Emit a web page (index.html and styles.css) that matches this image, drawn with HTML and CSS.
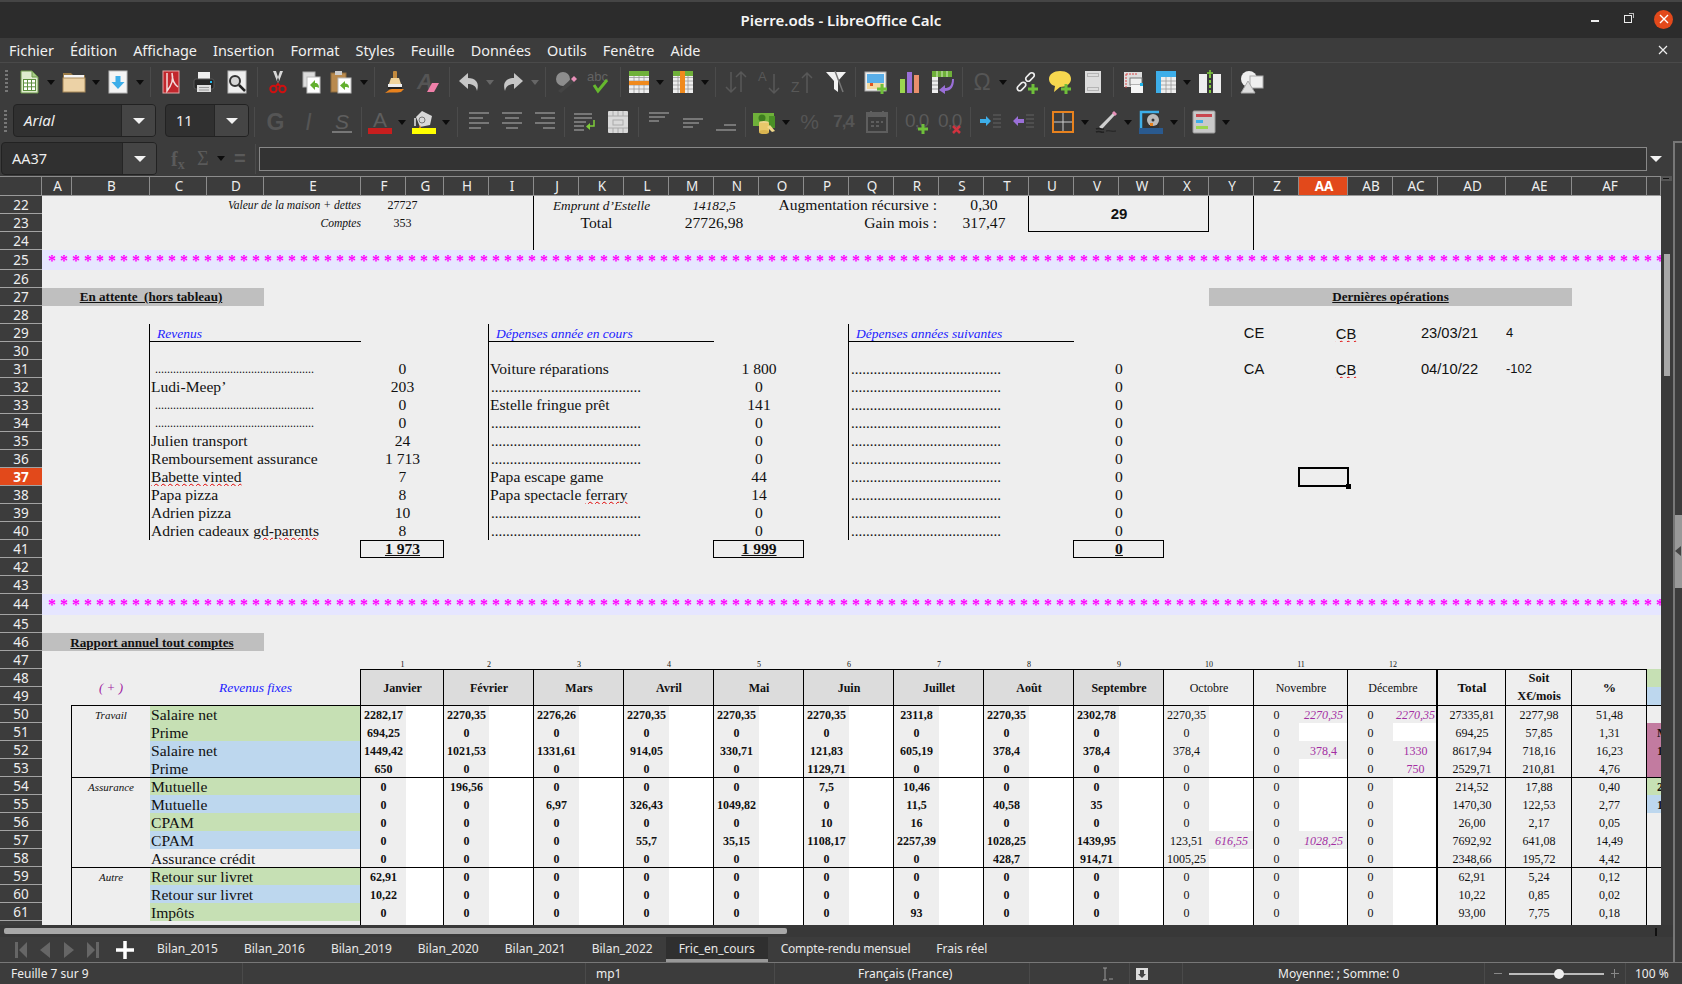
FILE: index.html
```html
<!DOCTYPE html>
<html lang="fr">
<head>
    <meta charset="UTF-8">
    <title>Pierre.ods - LibreOffice Calc</title>
    <link rel="stylesheet" href="styles.css">
</head>
<body>
<header class="title">
    <span class="title-text">Pierre.ods - LibreOffice Calc</span>
    <div class="win-btns">
        <span class="win-min"></span>
        <span class="win-max"></span>
        <span class="win-close"><svg width="10" height="10" viewBox="0 0 10 10"><path d="M1 1l8 8M9 1l-8 8" stroke="#fff" stroke-width="1.4"/></svg></span>
    </div>
</header>
<nav class="menu">
    <span>Fichier</span><span>Édition</span><span>Affichage</span><span>Insertion</span><span>Format</span><span>Styles</span><span>Feuille</span><span>Données</span><span>Outils</span><span>Fenêtre</span><span>Aide</span>
    <svg class="menu-close" width="10" height="10" viewBox="0 0 10 10"><path d="M1 1l8 8M9 1l-8 8" stroke="#eee" stroke-width="1.2"/></svg>
</nav>

<div class="toolbar tb1">
    <span class="grip"></span>
    <span class="tb"><svg viewBox="0 0 24 24"><path d="M4 1h11l6 6v16H4z" fill="#dfeccf" stroke="#6e9a4c"/><path d="M15 1v6h6z" fill="#a9cd88" stroke="#6e9a4c"/><rect x="6.5" y="9.5" width="12" height="11" fill="#fff" stroke="#5c8f3e"/><path d="M6.5 13h12M6.5 16.8h12M10.5 9.5v11M14.5 9.5v11" stroke="#5c8f3e"/></svg></span>
    <span class="dd"></span>
    <span class="tb"><svg viewBox="0 0 24 24"><path d="M1 3h8l2 2h12v6H1z" fill="#9a7b47"/><rect x="2" y="5" width="20" height="4" fill="#f5f5f5"/><rect x="1" y="8" width="22" height="14" fill="#ecd2a6" stroke="#a98a5a"/></svg></span>
    <span class="dd"></span>
    <span class="tb w32"><svg viewBox="0 0 24 24"><rect x="3" y="1" width="18" height="22" fill="#f4f4f4" stroke="#bbb"/><path d="M9.5 6h5v6h4l-6.5 7-6.5-7h4z" fill="#3daee9"/></svg></span>
    <span class="dd"></span>
    <span class="sep"></span>
    <span class="tb"><svg viewBox="0 0 24 24"><rect x="4" y="1" width="16" height="22" fill="#c2272d" stroke="#e6a5a5"/><path d="M8 3v18c4-5 7-11 5-18M13 3c0 6 2 11 6 14" fill="none" stroke="#f3dcdc" stroke-width="1.5"/></svg></span>
    <span class="tb"><svg viewBox="0 0 24 24"><rect x="6" y="2" width="12" height="8" fill="#eee"/><rect x="2" y="9" width="20" height="10" rx="2" fill="#262626" stroke="#555"/><rect x="5" y="15" width="14" height="7" fill="#ddd"/><path d="M7 17.5h10M7 20h10" stroke="#999"/><rect x="18" y="11" width="2" height="2" fill="#1fb5e9"/></svg></span>
    <span class="tb"><svg viewBox="0 0 24 24"><rect x="3" y="1" width="18" height="22" fill="#eee" stroke="#bbb"/><circle cx="10" cy="11" r="5" fill="#d5d5d5" stroke="#333" stroke-width="2"/><path d="M14 15l6 6" stroke="#222" stroke-width="2.5"/></svg></span>
    <span class="sep"></span>
    <span class="tb"><svg viewBox="0 0 24 24"><path d="M7 1l5 13 1-4-3-9zM17 1l-5 13-1-4 3-9z" fill="#d8d8d8"/><circle cx="7.5" cy="19" r="3.2" fill="none" stroke="#d01010" stroke-width="2"/><circle cx="16.5" cy="19" r="3.2" fill="none" stroke="#d01010" stroke-width="2"/><path d="M10 16l2-2 2 2" fill="none" stroke="#d01010" stroke-width="2"/></svg></span>
    <span class="tb"><svg viewBox="0 0 24 24"><rect x="4" y="2" width="12" height="15" fill="#ddd" stroke="#aaa"/><rect x="8" y="7" width="13" height="16" fill="#fff" stroke="#bbb"/><path d="M16 10l-5 5 5 5v-3c2 0 3 0 4 1 0-3-1-5-4-5z" fill="#63b02f"/></svg></span>
    <span class="tb w30"><svg viewBox="0 0 24 24"><rect x="1" y="3" width="15" height="19" fill="#b98a4e" stroke="#8c6a3c"/><rect x="5" y="1" width="7" height="4" fill="#ccc"/><rect x="8" y="8" width="13" height="15" fill="#fff" stroke="#bbb"/><path d="M15 11l-5 4.500 5 4.500v-3c2 0 3 0 4 1 0-3-1-4.500-4-4.500z" fill="#63b02f"/></svg></span>
    <span class="dd w13"></span>
    <span class="sep"></span>
    <span class="tb"><svg viewBox="0 0 24 24"><rect x="10" y="1" width="4" height="8" rx="1" fill="#c28a3e"/><path d="M8 8h8l2 6H6z" fill="#efd39c"/><rect x="5" y="14" width="14" height="3" fill="#eee"/><rect x="5" y="17" width="14" height="2" fill="#222"/><path d="M2 23c2-1 4-4 7-4h12l-3 3c-5 1-10 0-16 1z" fill="#e8821e"/></svg></span>
    <span class="tb w34"><svg viewBox="0 0 24 24"><text x="1" y="19" class="ico-t" font-size="22" font-style="italic" font-weight="bold" fill="#555">A</text><path d="M11 22l5-9h7l-5 9z" fill="#ef7fa8"/></svg></span>
    <span class="sep"></span>
    <span class="tb w31"><svg viewBox="0 0 24 24"><path d="M11 3L2 11l9 8v-5c5 0 8 2 9 7 3-9-2-13-9-13z" fill="#c6c6c6"/></svg></span>
    <span class="dd off"></span>
    <span class="tb"><svg viewBox="0 0 24 24"><path d="M13 3l9 8-9 8v-5c-5 0-8 2-9 7-3-9 2-13 9-13z" fill="#c6c6c6"/></svg></span>
    <span class="dd off"></span>
    <span class="sep"></span>
    <span class="tb"><svg viewBox="0 0 24 24"><circle cx="9" cy="9" r="7" fill="#8d8d8d"/><path d="M4 21l13-12 3 3L7 23z" fill="#444"/><path d="M17 9l3-3 3 3-3 3z" fill="#e88fb8"/></svg></span>
    <span class="tb w34"><svg viewBox="0 0 24 24"><text x="0" y="11" class="ico-t" font-size="13" fill="#636363">abc</text><path d="M7 15l4 6 9-11" stroke="#66b82e" stroke-width="3" fill="none"/></svg></span>
    <span class="sep"></span>
    <span class="tb w30"><svg viewBox="0 0 24 24"><rect x="2" y="1" width="20" height="22" fill="#eee"/><path d="M2 7.500h20M2 11h20M2 15h20M2 19h20M7 1v22M12 1v22M17 1v22" stroke="#999" stroke-width=".8"/><rect x="2" y="1" width="20" height="5" fill="#6fb13a"/><rect x="2" y="11" width="20" height="4" fill="#f08a1d"/></svg></span>
    <span class="dd"></span>
    <span class="tb"><svg viewBox="0 0 24 24"><rect x="2" y="1" width="20" height="22" fill="#eee"/><path d="M2 7.500h20M2 11h20M2 15h20M2 19h20M7 1v22M12 1v22M17 1v22" stroke="#999" stroke-width=".8"/><rect x="2" y="1" width="20" height="5" fill="#6fb13a"/><rect x="9" y="1" width="5" height="22" fill="#f08a1d"/></svg></span>
    <span class="dd"></span>
    <span class="sep"></span>
    <span class="tb w34"><svg viewBox="0 0 24 24"><path d="M7 2v20M2 17l5 5 5-5M17 22V2M12 7l5-5 5 5" fill="none" stroke="#585858" stroke-width="1.500"/></svg></span>
    <span class="tb"><svg viewBox="0 0 24 24"><text x="0" y="11" class="ico-t" font-size="13" fill="#585858">A</text><path d="M16 4v19M11 18l5 5 5-5" fill="none" stroke="#585858" stroke-width="1.500"/></svg></span>
    <span class="tb w34"><svg viewBox="0 0 24 24"><text x="0" y="22" class="ico-t" font-size="14" fill="#585858">Z</text><path d="M16 23V3M11 8l5-5 5 5" fill="none" stroke="#585858" stroke-width="1.500"/></svg></span>
    <span class="tb w31"><svg viewBox="0 0 24 24"><path d="M2 2h20l-8 9v11l-4-3v-8z" fill="#f2f2f2"/><path d="M11 1l8 21" stroke="#777" stroke-width="1.500"/></svg></span>
    <span class="sep"></span>
    <span class="tb w34"><svg viewBox="0 0 24 24"><rect x="1" y="2" width="21" height="19" fill="#eee" stroke="#aaa"/><rect x="3" y="4" width="17" height="9" fill="#59aee8"/><rect x="3" y="13" width="17" height="6" fill="#f3d9a0"/><rect x="6" y="13" width="3" height="3" fill="#e0541e"/><path d="M18 14v10M13 19h10" stroke="#6fbf3a" stroke-width="3"/></svg></span>
    <span class="tb w32"><svg viewBox="0 0 24 24"><rect x="3" y="9" width="5" height="14" fill="#9bd64f"/><rect x="10" y="2" width="5" height="21" fill="#9a6fd8"/><rect x="17" y="5" width="5" height="18" fill="#ea8f6c"/></svg></span>
    <span class="tb"><svg viewBox="0 0 24 24"><rect x="2" y="1" width="20" height="6" fill="#6fb13a"/><path d="M7 1v6M12 1v6M17 1v6" stroke="#d7ebc2"/><rect x="2" y="7" width="6" height="16" fill="#eee"/><path d="M2 11h6M2 15h6M2 19h6" stroke="#999"/><path d="M22 9c0 7-3 9-7 9v-3l-6 5 6 4v-3c6 0 9-4 9-12z" fill="#9a6fd8"/></svg></span>
    <span class="sep"></span>
    <span class="tb w31"><svg viewBox="0 0 24 24"><text x="12" y="20" text-anchor="middle" class="ico-t" font-size="23" fill="#565656">Ω</text></svg></span>
    <span class="dd"></span>
    <span class="tb w35"><svg viewBox="0 0 24 24"><g fill="none" stroke="#eee" stroke-width="1.700"><rect x="-2.500" y="-5" width="5" height="10" rx="2.500" transform="translate(6.500 16.500) rotate(45)"/><rect x="-2.500" y="-5" width="5" height="10" rx="2.500" transform="translate(15 7) rotate(45)"/></g><path d="M18 14v10M13 19h10" stroke="#6fbf3a" stroke-width="3"/></svg></span>
    <span class="tb w32"><svg viewBox="0 0 24 24"><path d="M12 1c7 0 11 3 11 8s-5 8-11 8l-6 5 1-6c-4-1-6-4-6-7 0-5 5-8 11-8z" fill="#f7d84f"/><path d="M18 14v10M13 19h10" stroke="#6fbf3a" stroke-width="3"/></svg></span>
    <span class="tb"><svg viewBox="0 0 24 24"><rect x="4" y="1" width="16" height="22" fill="#ddd"/><rect x="6.500" y="3.500" width="11" height="3" fill="none" stroke="#b5b5b5"/><rect x="6.500" y="17.500" width="11" height="3" fill="none" stroke="#b5b5b5"/></svg></span>
    <span class="sep"></span>
    <span class="tb"><svg viewBox="0 0 24 24"><rect x="2" y="2" width="18" height="15" fill="#ddd"/><path d="M4 4h12M4 4v14" stroke="#d44" stroke-dasharray="2 1"/><rect x="8" y="8" width="12" height="7" fill="#efefef" stroke="#777"/><rect x="9" y="15" width="12" height="8" fill="#f5f5f5"/><rect x="18" y="13" width="3" height="3" fill="#1fb5e9"/></svg></span>
    <span class="tb w31"><svg viewBox="0 0 24 24"><rect x="2" y="1" width="20" height="22" fill="#eee"/><path d="M2 11h20M2 15h20M2 19h20M12 1v22M17 1v22" stroke="#999" stroke-width=".8"/><rect x="2" y="1" width="20" height="6" fill="#3daee9"/><rect x="2" y="1" width="5" height="22" fill="#3daee9"/></svg></span>
    <span class="dd"></span>
    <span class="tb w34"><svg viewBox="0 0 24 24"><rect x="1" y="4" width="8" height="19" fill="#efefef"/><rect x="15" y="4" width="8" height="19" fill="#efefef"/><path d="M12 5v18" stroke="#7ecb3a" stroke-width="2" stroke-dasharray="3 2"/><path d="M12 0v6M9 3h6" stroke="#7ecb3a" stroke-width="1.500"/></svg></span>
    <span class="sep"></span>
    <span class="tb"><svg viewBox="0 0 24 24"><circle cx="9" cy="9" r="8" fill="#efefef"/><rect x="10" y="6" width="13" height="12" fill="#efefef" stroke="#aaa"/><path d="M8 11l7 12H1z" fill="#dedede" stroke="#aaa"/></svg></span>
</div>

<div class="toolbar tb2">
    <span class="grip"></span>
    <div class="combo font-box"><span class="combo-text ital">Arial</span><span class="combo-btn"></span></div>
    <div class="combo size-box"><span class="combo-text">11</span><span class="combo-btn"></span></div>
    <span class="sep w10"></span>
    <span class="tb"><span class="gl bold">G</span></span>
    <span class="tb"><span class="gl ital">I</span></span>
    <span class="tb"><svg viewBox="0 0 24 24"><text x="12" y="19" text-anchor="middle" class="ico-t" font-size="21" font-style="italic" fill="#5e5e5e">S</text><rect x="2" y="21" width="20" height="2" fill="#777"/></svg></span>
    <span class="sep w6"></span>
    <span class="tb w32"><svg viewBox="0 0 24 24"><text x="12" y="17" text-anchor="middle" class="ico-t" font-size="21" fill="#5e5e5e">A</text><rect y="18" width="24" height="6" fill="#c81e1e"/></svg></span>
    <span class="dd"></span>
    <span class="tb w32"><svg viewBox="0 0 24 24"><path d="M4 7l6-6 10 5-2 9-10 2z" fill="#d8d8d8"/><circle cx="10" cy="10" r="3" fill="none" stroke="#777"/><path d="M3 8v8" stroke="#bbb" stroke-width="2"/><path d="M7 18l1-3 1 3z" fill="#f08a1d"/><rect y="18" width="24" height="6" fill="#ffff00"/></svg></span>
    <span class="dd"></span>
    <span class="sep w10"></span>
    <span class="tb"><svg viewBox="0 0 24 24" class="lines"><path d="M2 3h20M2 8h14M2 13h20M2 18h12"/></svg></span>
    <span class="tb"><svg viewBox="0 0 24 24" class="lines"><path d="M2 3h20M5 8h14M2 13h20M6 18h12"/></svg></span>
    <span class="tb"><svg viewBox="0 0 24 24" class="lines"><path d="M2 3h20M8 8h14M2 13h20M10 18h12"/></svg></span>
    <span class="sep w6"></span>
    <span class="tb w34"><svg viewBox="0 0 24 24" class="lines"><path d="M2 4h18M2 8h18M2 12h12M2 16h10M2 20h10"/><path d="M22 10v6h-5" fill="none" style="stroke:#7ecb3a"/><path d="M18 13l-4 3.500 4 3.500z" style="fill:#7ecb3a;stroke:none"/></svg></span>
    <span class="tb"><svg viewBox="0 0 24 24"><rect x="2" y="1" width="20" height="22" rx="1" fill="#d9d9d9"/><path d="M2 6h20M2 18h20M7 1v5M12 1v5M17 1v5M7 18v5M12 18v5M17 18v5" stroke="#aaa"/><rect x="7" y="10" width="10" height="5" fill="none" stroke="#aaa"/></svg></span>
    <span class="sep"></span>
    <span class="tb w34"><svg viewBox="0 0 24 24" class="lines"><path d="M2 3h20M2 7h16M2 11h10"/></svg></span>
    <span class="tb"><svg viewBox="0 0 24 24" class="lines"><path d="M2 9h20M2 13h16M2 17h10"/></svg></span>
    <span class="tb"><svg viewBox="0 0 24 24" class="lines"><path d="M10 15h12M2 20h20"/></svg></span>
    <span class="sep w6"></span>
    <span class="tb w32"><svg viewBox="0 0 24 24"><rect x="1" y="3" width="21" height="13" fill="#6fb13a"/><circle cx="10" cy="8" r="3.500" fill="#3e7d1f"/><rect x="17" y="6" width="6" height="12" fill="#4a9026"/><ellipse cx="12" cy="13" rx="5" ry="2" fill="#ecd38a"/><rect x="7" y="13" width="10" height="9" fill="#e8c86a"/><ellipse cx="12" cy="22" rx="5" ry="2" fill="#d9b450"/><path d="M18 15l5 6-3 1-5-5z" fill="#f0d88a"/></svg></span>
    <span class="dd"></span>
    <span class="tb w35"><span class="gl pct">%</span></span>
    <span class="tb"><span class="gl num">7,4</span></span>
    <span class="tb"><svg viewBox="0 0 24 24"><rect x="2" y="3" width="20" height="19" fill="none" stroke="#5e5e5e" stroke-width="2"/><rect x="2" y="3" width="20" height="4" fill="#5e5e5e"/><path d="M6 1v4M18 1v4" stroke="#5e5e5e" stroke-width="2"/><path d="M6 12h3M11 12h3M16 12h2M6 16h3M11 16h3" stroke="#5e5e5e" stroke-width="2"/></svg></span>
    <span class="sep w6"></span>
    <span class="tb w35"><svg viewBox="0 0 24 24"><text x="0" y="17" class="ico-t" font-size="19" letter-spacing="-1" fill="#5a5a5a">0,0</text><path d="M18 14v10M13 19h10" stroke="#6fbf3a" stroke-width="3"/></svg></span>
    <span class="tb w32"><svg viewBox="0 0 24 24"><text x="0" y="17" class="ico-t" font-size="19" letter-spacing="-1" fill="#5a5a5a">0,0</text><path d="M15 16l7 7M22 16l-7 7" stroke="#d0333f" stroke-width="2.500"/></svg></span>
    <span class="sep"></span>
    <span class="tb w34"><svg viewBox="0 0 24 24"><path d="M14 5h8M14 9h8M14 13h8M14 17h8" stroke="#555" stroke-width="1.500"/><path d="M1 9h6V6l5 5-5 5v-3H1z" fill="#3daee9"/></svg></span>
    <span class="tb w32"><svg viewBox="0 0 24 24"><path d="M14 5h8M14 9h8M14 13h8M14 17h8" stroke="#555" stroke-width="1.500"/><path d="M12 9H6V6l-5 5 5 5v-3h6z" fill="#9a6fd8"/></svg></span>
    <span class="sep"></span>
    <span class="tb w30"><svg viewBox="0 0 24 24"><rect x="2" y="2" width="20" height="20" fill="none" stroke="#e8821e" stroke-width="2"/><path d="M12 3v18M3 12h18" stroke="#ccc"/></svg></span>
    <span class="dd w13"></span>
    <span class="tb w30"><svg viewBox="0 0 24 24"><path d="M5 17L19 3l2 2L8 19z" fill="#cfcfcf"/><path d="M18 3l2-2 3 3-2 2z" fill="#e88fb8"/><path d="M2 19c4-2 4 1 8 0M2 22c4-2 4 1 8 0" fill="none" stroke="#222" stroke-width="1.500"/><path d="M12 21c3-1 6 1 10 0" stroke="#222" fill="none"/></svg></span>
    <span class="dd w14"></span>
    <span class="tb w32"><svg viewBox="0 0 24 24"><path d="M2 2h18v16H2z" fill="#333"/><path d="M2 18V2h18" fill="none" stroke="#3daee9" stroke-width="2.500"/><circle cx="14" cy="10" r="6" fill="#bbb"/><circle cx="14" cy="10" r="1.500" fill="#333"/><rect x="11" y="13" width="3" height="3" fill="#e8821e"/><rect y="18" width="24" height="6" fill="#2a5a8f"/></svg></span>
    <span class="dd w13"></span>
    <span class="sep"></span>
    <span class="tb w31"><svg viewBox="0 0 24 24"><rect x="1" y="1" width="22" height="22" rx="1" fill="#c9c9c9" stroke="#999"/><rect x="4" y="4" width="16" height="3" fill="#c9474f"/><rect x="4" y="10" width="7" height="3" fill="#3daee9"/><rect x="4" y="16" width="12" height="3" fill="#9bd64f"/></svg></span>
    <span class="dd w13"></span>
</div>

<div class="main">
    <div class="work">
        <div class="formula">
            <div class="combo name-box"><span class="combo-text">AA37</span><span class="combo-btn"></span></div>
            <span class="fx-ico fx">f<sub>x</sub></span>
            <span class="fx-ico sum">Σ</span>
            <span class="dd small"></span>
            <span class="fx-ico eq">=</span>
            <span class="sep fx-sep"></span>
            <div class="fx-input"></div>
            <span class="fx-down"></span>
        </div>

        <div class="sheet-wrap">
            <div class="sheet">
                <table class="grid">
                    <colgroup>
                        <col class="c42"><col class="c30"><col class="c78"><col class="c57"><col class="c57"><col class="c97"><col class="c45"><col class="c38"><col class="c45"><col class="c45"><col class="c45"><col class="c45"><col class="c45"><col class="c45"><col class="c45"><col class="c45"><col class="c45"><col class="c45"><col class="c45"><col class="c45"><col class="c45"><col class="c45"><col class="c45"><col class="c45"><col class="c45"><col class="c45"><col class="c45"><col class="c49"><col class="c45"><col class="c45"><col class="c68"><col class="c66"><col class="c75"><col class="c14">
                    </colgroup>
                    <thead>
                        <tr>
                            <th></th><th>A</th><th>B</th><th>C</th><th>D</th><th>E</th><th>F</th><th>G</th><th>H</th><th>I</th><th>J</th><th>K</th><th>L</th><th>M</th><th>N</th><th>O</th><th>P</th><th>Q</th><th>R</th><th>S</th><th>T</th><th>U</th><th>V</th><th>W</th><th>X</th><th>Y</th><th>Z</th><th class="sel">AA</th><th>AB</th><th>AC</th><th>AD</th><th>AE</th><th>AF</th><th></th>
                        </tr>
                    </thead>
                    <tbody>
                        <tr>
                            <th>22</th><td colspan="5" class="small-i right">Valeur de la maison + dettes</td><td colspan="2" class="s12 ctr">27727</td><td colspan="2"></td><td colspan="3" class="bl i13 ctr">Emprunt d’Estelle</td><td colspan="2" class="i13 ctr">14182,5</td><td colspan="4" class="right gain">Augmentation récursive :</td><td colspan="2" class="ctr">0,30</td><td colspan="4" rowspan="2" class="box29">29</td><td class="br"></td><td colspan="8"></td>
                        </tr>
                        <tr>
                            <th>23</th><td colspan="5" class="small-i right">Comptes</td><td colspan="2" class="s12 ctr">353</td><td colspan="2"></td><td colspan="3" class="bl ctr total-lab">Total</td><td colspan="2" class="ctr">27726,98</td><td colspan="4" class="right gain">Gain mois :</td><td colspan="2" class="ctr">317,47</td><td class="br"></td><td colspan="8"></td>
                        </tr>
                        <tr>
                            <th>24</th><td colspan="9"></td><td colspan="15" class="bl"></td><td class="br"></td><td colspan="8"></td>
                        </tr>
                        <tr class="star-row">
                            <th>25</th><td colspan="33" class="stars">* * * * * * * * * * * * * * * * * * * * * * * * * * * * * * * * * * * * * * * * * * * * * * * * * * * * * * * * * * * * * * * * * * * * * * * * * * * * * * * * * * * * * * * * * * * * * * * * * * * * * * * * * * * * * * * * * * * * * * * * * * * * * * * * * * * * * * * * * *</td>
                        </tr>
                        <tr><th>26</th><td colspan="33"></td></tr>
                        <tr>
                            <th>27</th><td colspan="4" class="sec sec-a"><u>En attente&nbsp; (hors tableau)</u></td><td colspan="20"></td><td colspan="7" class="sec"><u>Dernières opérations</u></td><td colspan="2"></td>
                        </tr>
                        <tr><th>28</th><td colspan="33"></td></tr>
                        <tr>
                            <th>29</th><td colspan="2"></td><td colspan="3" class="bl bb sub">Revenus</td><td colspan="3"></td><td colspan="5" class="bl bb sub">Dépenses année en cours</td><td colspan="3"></td><td colspan="5" class="bl bb sub">Dépenses années suivantes</td><td colspan="3"></td><td colspan="2" class="op ctr">CE</td><td colspan="2" class="op ctr cb"><span class="typo">CB</span></td><td colspan="2" class="op ctr">23/03/21</td><td class="op-n">4</td><td colspan="2"></td>
                        </tr>
                        <tr>
                            <th>30</th><td colspan="2"></td><td colspan="3" class="bl"></td><td colspan="3"></td><td colspan="5" class="bl"></td><td colspan="3"></td><td colspan="5" class="bl"></td><td colspan="12"></td>
                        </tr>
                        <tr>
                            <th>31</th><td colspan="2"></td><td colspan="3" class="bl dots">.....................................................</td><td colspan="2" class="ctr">0</td><td></td><td colspan="5" class="bl lab">Voiture réparations</td><td colspan="2" class="ctr">1 800</td><td></td><td colspan="5" class="bl dots2">........................................</td><td colspan="2" class="ctr">0</td><td></td><td colspan="2" class="op ctr">CA</td><td colspan="2" class="op ctr cb"><span class="typo">CB</span></td><td colspan="2" class="op ctr">04/10/22</td><td class="op-n">-102</td><td colspan="2"></td>
                        </tr>
                        <tr>
                            <th>32</th><td colspan="2"></td><td colspan="3" class="bl lab">Ludi-Meep’</td><td colspan="2" class="ctr">203</td><td></td><td colspan="5" class="bl dots2">........................................</td><td colspan="2" class="ctr">0</td><td></td><td colspan="5" class="bl dots2">........................................</td><td colspan="2" class="ctr">0</td><td colspan="10"></td>
                        </tr>
                        <tr>
                            <th>33</th><td colspan="2"></td><td colspan="3" class="bl dots">.....................................................</td><td colspan="2" class="ctr">0</td><td></td><td colspan="5" class="bl lab">Estelle fringue prêt</td><td colspan="2" class="ctr">141</td><td></td><td colspan="5" class="bl dots2">........................................</td><td colspan="2" class="ctr">0</td><td colspan="10"></td>
                        </tr>
                        <tr>
                            <th>34</th><td colspan="2"></td><td colspan="3" class="bl dots">.....................................................</td><td colspan="2" class="ctr">0</td><td></td><td colspan="5" class="bl dots2">........................................</td><td colspan="2" class="ctr">0</td><td></td><td colspan="5" class="bl dots2">........................................</td><td colspan="2" class="ctr">0</td><td colspan="10"></td>
                        </tr>
                        <tr>
                            <th>35</th><td colspan="2"></td><td colspan="3" class="bl lab">Julien transport</td><td colspan="2" class="ctr">24</td><td></td><td colspan="5" class="bl dots2">........................................</td><td colspan="2" class="ctr">0</td><td></td><td colspan="5" class="bl dots2">........................................</td><td colspan="2" class="ctr">0</td><td colspan="10"></td>
                        </tr>
                        <tr>
                            <th>36</th><td colspan="2"></td><td colspan="3" class="bl lab">Remboursement assurance</td><td colspan="2" class="ctr">1 713</td><td></td><td colspan="5" class="bl dots2">........................................</td><td colspan="2" class="ctr">0</td><td></td><td colspan="5" class="bl dots2">........................................</td><td colspan="2" class="ctr">0</td><td colspan="10"></td>
                        </tr>
                        <tr>
                            <th class="sel">37</th><td colspan="2"></td><td colspan="3" class="bl lab"><span class="typo">Babette vinted</span></td><td colspan="2" class="ctr">7</td><td></td><td colspan="5" class="bl lab">Papa escape game</td><td colspan="2" class="ctr">44</td><td></td><td colspan="5" class="bl dots2">........................................</td><td colspan="2" class="ctr">0</td><td colspan="3"></td><td class="cursor"><span class="handle"></span></td><td colspan="6"></td>
                        </tr>
                        <tr>
                            <th>38</th><td colspan="2"></td><td colspan="3" class="bl lab">Papa pizza</td><td colspan="2" class="ctr">8</td><td></td><td colspan="5" class="bl lab">Papa spectacle <span class="typo">ferrary</span></td><td colspan="2" class="ctr">14</td><td></td><td colspan="5" class="bl dots2">........................................</td><td colspan="2" class="ctr">0</td><td colspan="10"></td>
                        </tr>
                        <tr>
                            <th>39</th><td colspan="2"></td><td colspan="3" class="bl lab">Adrien pizza</td><td colspan="2" class="ctr">10</td><td></td><td colspan="5" class="bl dots2">........................................</td><td colspan="2" class="ctr">0</td><td></td><td colspan="5" class="bl dots2">........................................</td><td colspan="2" class="ctr">0</td><td colspan="10"></td>
                        </tr>
                        <tr>
                            <th>40</th><td colspan="2"></td><td colspan="3" class="bl lab">Adrien cadeaux <span class="typo">gd-parents</span></td><td colspan="2" class="ctr">8</td><td></td><td colspan="5" class="bl dots2">........................................</td><td colspan="2" class="ctr">0</td><td></td><td colspan="5" class="bl dots2">........................................</td><td colspan="2" class="ctr">0</td><td colspan="10"></td>
                        </tr>
                        <tr>
                            <th>41</th><td colspan="5"></td><td colspan="2" class="sum-box"><u>1 973</u></td><td colspan="6"></td><td colspan="2" class="sum-box"><u>1 999</u></td><td colspan="6"></td><td colspan="2" class="sum-box"><u>0</u></td><td colspan="10"></td>
                        </tr>
                        <tr><th>42</th><td colspan="33"></td></tr>
                        <tr><th>43</th><td colspan="33"></td></tr>
                        <tr class="star-row tall">
                            <th>44</th><td colspan="33" class="stars">* * * * * * * * * * * * * * * * * * * * * * * * * * * * * * * * * * * * * * * * * * * * * * * * * * * * * * * * * * * * * * * * * * * * * * * * * * * * * * * * * * * * * * * * * * * * * * * * * * * * * * * * * * * * * * * * * * * * * * * * * * * * * * * * * * * * * * * * * *</td>
                        </tr>
                        <tr><th>45</th><td colspan="33"></td></tr>
                    </tbody>
                    <tbody class="report">
                        <tr>
                            <th>46</th><td colspan="4" class="sec sec-b"><u>Rapport annuel tout comptes</u></td><td colspan="29"></td>
                        </tr>
                        <tr class="nums">
                            <th>47</th><td colspan="5"></td><td colspan="2">1</td><td colspan="2">2</td><td colspan="2">3</td><td colspan="2">4</td><td colspan="2">5</td><td colspan="2">6</td><td colspan="2">7</td><td colspan="2">8</td><td colspan="2">9</td><td colspan="2">10</td><td colspan="2">11</td><td colspan="2">12</td><td colspan="4"></td>
                        </tr>
                        <tr>
                            <th>48</th><td rowspan="2"></td><td rowspan="2" class="plus">( + )</td><td rowspan="2" colspan="3" class="fixes">Revenus fixes</td>
                            <td rowspan="2" colspan="2" class="hm">Janvier</td><td rowspan="2" colspan="2" class="hm">Février</td><td rowspan="2" colspan="2" class="hm">Mars</td><td rowspan="2" colspan="2" class="hm">Avril</td><td rowspan="2" colspan="2" class="hm">Mai</td><td rowspan="2" colspan="2" class="hm">Juin</td><td rowspan="2" colspan="2" class="hm">Juillet</td><td rowspan="2" colspan="2" class="hm">Août</td><td rowspan="2" colspan="2" class="hm">Septembre</td>
                            <td rowspan="2" colspan="2" class="hl">Octobre</td><td rowspan="2" colspan="2" class="hl">Novembre</td><td rowspan="2" colspan="2" class="hl">Décembre</td>
                            <td rowspan="2" class="ht thick">Total</td><td rowspan="2" class="ht two">Soit<br>X€/mois</td><td rowspan="2" class="ht">%</td><td class="side gr"></td>
                        </tr>
                        <tr><th>49</th><td class="side bu"></td></tr>
                        <tr class="top">
                            <th>50</th><td class="a"></td><td class="cat">Travail</td><td colspan="3" class="lab gr">Salaire net</td>
                            <td class="mb">2282,17</td><td class="w"></td><td class="mb">2270,35</td><td class="w"></td><td class="mb">2276,26</td><td class="w"></td><td class="mb">2270,35</td><td class="w"></td><td class="mb">2270,35</td><td class="w"></td><td class="mb">2270,35</td><td class="w"></td><td class="mb">2311,8</td><td class="w"></td><td class="mb">2270,35</td><td class="w"></td><td class="mb">2302,78</td><td class="w"></td>
                            <td class="m">2270,35</td><td class="w"></td><td class="m">0</td><td class="pi">2270,35</td><td class="m">0</td><td class="pi last">2270,35</td>
                            <td class="tot thick">27335,81</td><td class="tot">2277,98</td><td class="tot">51,48</td><td class="side"></td>
                        </tr>
                        <tr>
                            <th>51</th><td class="a"></td><td class="cat"></td><td colspan="3" class="lab gr">Prime</td>
                            <td class="mb">694,25</td><td class="w"></td><td class="mb">0</td><td class="w"></td><td class="mb">0</td><td class="w"></td><td class="mb">0</td><td class="w"></td><td class="mb">0</td><td class="w"></td><td class="mb">0</td><td class="w"></td><td class="mb">0</td><td class="w"></td><td class="mb">0</td><td class="w"></td><td class="mb">0</td><td class="w"></td>
                            <td class="m">0</td><td class="w"></td><td class="m">0</td><td class="w"></td><td class="m">0</td><td class="w"></td>
                            <td class="tot thick">694,25</td><td class="tot">57,85</td><td class="tot">1,31</td><td class="side pk">M</td>
                        </tr>
                        <tr>
                            <th>52</th><td class="a"></td><td class="cat"></td><td colspan="3" class="lab bu">Salaire net</td>
                            <td class="mb">1449,42</td><td class="w"></td><td class="mb">1021,53</td><td class="w"></td><td class="mb">1331,61</td><td class="w"></td><td class="mb">914,05</td><td class="w"></td><td class="mb">330,71</td><td class="w"></td><td class="mb">121,83</td><td class="w"></td><td class="mb">605,19</td><td class="w"></td><td class="mb">378,4</td><td class="w"></td><td class="mb">378,4</td><td class="w"></td>
                            <td class="m">378,4</td><td class="w"></td><td class="m">0</td><td class="pu">378,4</td><td class="m">0</td><td class="pu">1330</td>
                            <td class="tot thick">8617,94</td><td class="tot">718,16</td><td class="tot">16,23</td><td class="side pk">1</td>
                        </tr>
                        <tr>
                            <th>53</th><td class="a"></td><td class="cat"></td><td colspan="3" class="lab bu">Prime</td>
                            <td class="mb">650</td><td class="w"></td><td class="mb">0</td><td class="w"></td><td class="mb">0</td><td class="w"></td><td class="mb">0</td><td class="w"></td><td class="mb">0</td><td class="w"></td><td class="mb">1129,71</td><td class="w"></td><td class="mb">0</td><td class="w"></td><td class="mb">0</td><td class="w"></td><td class="mb">0</td><td class="w"></td>
                            <td class="m">0</td><td class="w"></td><td class="m">0</td><td class="w"></td><td class="m">0</td><td class="pu">750</td>
                            <td class="tot thick">2529,71</td><td class="tot">210,81</td><td class="tot">4,76</td><td class="side pk"></td>
                        </tr>
                        <tr class="top">
                            <th>54</th><td class="a"></td><td class="cat">Assurance</td><td colspan="3" class="lab gr">Mutuelle</td>
                            <td class="mb">0</td><td class="w"></td><td class="mb">196,56</td><td class="w"></td><td class="mb">0</td><td class="w"></td><td class="mb">0</td><td class="w"></td><td class="mb">0</td><td class="w"></td><td class="mb">7,5</td><td class="w"></td><td class="mb">10,46</td><td class="w"></td><td class="mb">0</td><td class="w"></td><td class="mb">0</td><td class="w"></td>
                            <td class="m">0</td><td class="w"></td><td class="m">0</td><td class="w"></td><td class="m">0</td><td class="w"></td>
                            <td class="tot thick">214,52</td><td class="tot">17,88</td><td class="tot">0,40</td><td class="side gr">2</td>
                        </tr>
                        <tr>
                            <th>55</th><td class="a"></td><td class="cat"></td><td colspan="3" class="lab bu">Mutuelle</td>
                            <td class="mb">0</td><td class="w"></td><td class="mb">0</td><td class="w"></td><td class="mb">6,97</td><td class="w"></td><td class="mb">326,43</td><td class="w"></td><td class="mb">1049,82</td><td class="w"></td><td class="mb">0</td><td class="w"></td><td class="mb">11,5</td><td class="w"></td><td class="mb">40,58</td><td class="w"></td><td class="mb">35</td><td class="w"></td>
                            <td class="m">0</td><td class="w"></td><td class="m">0</td><td class="w"></td><td class="m">0</td><td class="w"></td>
                            <td class="tot thick">1470,30</td><td class="tot">122,53</td><td class="tot">2,77</td><td class="side bu">1</td>
                        </tr>
                        <tr>
                            <th>56</th><td class="a"></td><td class="cat"></td><td colspan="3" class="lab gr">CPAM</td>
                            <td class="mb">0</td><td class="w"></td><td class="mb">0</td><td class="w"></td><td class="mb">0</td><td class="w"></td><td class="mb">0</td><td class="w"></td><td class="mb">0</td><td class="w"></td><td class="mb">10</td><td class="w"></td><td class="mb">16</td><td class="w"></td><td class="mb">0</td><td class="w"></td><td class="mb">0</td><td class="w"></td>
                            <td class="m">0</td><td class="w"></td><td class="m">0</td><td class="w"></td><td class="m">0</td><td class="w"></td>
                            <td class="tot thick">26,00</td><td class="tot">2,17</td><td class="tot">0,05</td><td class="side"></td>
                        </tr>
                        <tr>
                            <th>57</th><td class="a"></td><td class="cat"></td><td colspan="3" class="lab bu">CPAM</td>
                            <td class="mb">0</td><td class="w"></td><td class="mb">0</td><td class="w"></td><td class="mb">0</td><td class="w"></td><td class="mb">55,7</td><td class="w"></td><td class="mb">35,15</td><td class="w"></td><td class="mb">1108,17</td><td class="w"></td><td class="mb">2257,39</td><td class="w"></td><td class="mb">1028,25</td><td class="w"></td><td class="mb">1439,95</td><td class="w"></td>
                            <td class="m">123,51</td><td class="pi">616,55</td><td class="m">0</td><td class="pi">1028,25</td><td class="m">0</td><td class="w"></td>
                            <td class="tot thick">7692,92</td><td class="tot">641,08</td><td class="tot">14,49</td><td class="side"></td>
                        </tr>
                        <tr>
                            <th>58</th><td class="a"></td><td class="cat"></td><td colspan="3" class="lab">Assurance crédit</td>
                            <td class="mb">0</td><td class="w"></td><td class="mb">0</td><td class="w"></td><td class="mb">0</td><td class="w"></td><td class="mb">0</td><td class="w"></td><td class="mb">0</td><td class="w"></td><td class="mb">0</td><td class="w"></td><td class="mb">0</td><td class="w"></td><td class="mb">428,7</td><td class="w"></td><td class="mb">914,71</td><td class="w"></td>
                            <td class="m">1005,25</td><td class="w"></td><td class="m">0</td><td class="w"></td><td class="m">0</td><td class="w"></td>
                            <td class="tot thick">2348,66</td><td class="tot">195,72</td><td class="tot">4,42</td><td class="side"></td>
                        </tr>
                        <tr class="top">
                            <th>59</th><td class="a"></td><td class="cat">Autre</td><td colspan="3" class="lab gr">Retour sur livret</td>
                            <td class="mb">62,91</td><td class="w"></td><td class="mb">0</td><td class="w"></td><td class="mb">0</td><td class="w"></td><td class="mb">0</td><td class="w"></td><td class="mb">0</td><td class="w"></td><td class="mb">0</td><td class="w"></td><td class="mb">0</td><td class="w"></td><td class="mb">0</td><td class="w"></td><td class="mb">0</td><td class="w"></td>
                            <td class="m">0</td><td class="w"></td><td class="m">0</td><td class="w"></td><td class="m">0</td><td class="w"></td>
                            <td class="tot thick">62,91</td><td class="tot">5,24</td><td class="tot">0,12</td><td class="side"></td>
                        </tr>
                        <tr>
                            <th>60</th><td class="a"></td><td class="cat"></td><td colspan="3" class="lab bu">Retour sur livret</td>
                            <td class="mb">10,22</td><td class="w"></td><td class="mb">0</td><td class="w"></td><td class="mb">0</td><td class="w"></td><td class="mb">0</td><td class="w"></td><td class="mb">0</td><td class="w"></td><td class="mb">0</td><td class="w"></td><td class="mb">0</td><td class="w"></td><td class="mb">0</td><td class="w"></td><td class="mb">0</td><td class="w"></td>
                            <td class="m">0</td><td class="w"></td><td class="m">0</td><td class="w"></td><td class="m">0</td><td class="w"></td>
                            <td class="tot thick">10,22</td><td class="tot">0,85</td><td class="tot">0,02</td><td class="side"></td>
                        </tr>
                        <tr>
                            <th>61</th><td class="a"></td><td class="cat"></td><td colspan="3" class="lab gr">Impôts</td>
                            <td class="mb">0</td><td class="w"></td><td class="mb">0</td><td class="w"></td><td class="mb">0</td><td class="w"></td><td class="mb">0</td><td class="w"></td><td class="mb">0</td><td class="w"></td><td class="mb">0</td><td class="w"></td><td class="mb">93</td><td class="w"></td><td class="mb">0</td><td class="w"></td><td class="mb">0</td><td class="w"></td>
                            <td class="m">0</td><td class="w"></td><td class="m">0</td><td class="w"></td><td class="m">0</td><td class="w"></td>
                            <td class="tot thick">93,00</td><td class="tot">7,75</td><td class="tot">0,18</td><td class="side"></td>
                        </tr>
                        <tr>
                            <th></th><td class="a"></td><td class="cat"></td><td colspan="3"></td>
                            <td class="m"></td><td class="w"></td><td class="m"></td><td class="w"></td><td class="m"></td><td class="w"></td><td class="m"></td><td class="w"></td><td class="m"></td><td class="w"></td><td class="m"></td><td class="w"></td><td class="m"></td><td class="w"></td><td class="m"></td><td class="w"></td><td class="m"></td><td class="w"></td><td class="m"></td><td class="w"></td><td class="m"></td><td class="w"></td><td class="m"></td><td class="w"></td>
                            <td class="tot thick"></td><td class="tot"></td><td class="tot"></td><td class="side"></td>
                        </tr>
                    </tbody>
                </table>
            </div>
            <div class="vscroll">
                <span class="split-h"></span>
                <span class="vthumb"></span>
            </div>
        </div>

        <div class="hscroll"><span class="hthumb"></span><span class="hgrip"></span></div>

        <div class="tabs">
            <div class="tab-nav">
                <svg width="12" height="18" viewBox="0 0 12 18"><path d="M0 1h3v16H0zM12 1v16L4 9z" fill="#666"/></svg>
                <svg width="12" height="18" viewBox="0 0 12 18"><path d="M11 1v16L1 9z" fill="#666"/></svg>
                <svg width="12" height="18" viewBox="0 0 12 18"><path d="M1 1v16l10-8z" fill="#666"/></svg>
                <svg width="12" height="18" viewBox="0 0 12 18"><path d="M0 1v16l8-8zM9 1h3v16H9z" fill="#666"/></svg>
                <svg class="tab-add" width="18" height="18" viewBox="0 0 18 18"><path d="M9 0v18M0 9h18" stroke="#fff" stroke-width="3.500"/></svg>
            </div>
            <span class="tab">Bilan_2015</span><span class="tab">Bilan_2016</span><span class="tab">Bilan_2019</span><span class="tab">Bilan_2020</span><span class="tab">Bilan_2021</span><span class="tab">Bilan_2022</span><span class="tab active">Fric_en_cours</span><span class="tab tab-long">Compte-rendu mensuel</span><span class="tab">Frais réel</span>
        </div>
    </div>
    <aside class="sidebar"><span class="side-handle"></span></aside>
</div>

<footer class="status">
    <span class="st st1">Feuille 7 sur 9</span>
    <span class="st st2"></span>
    <span class="st st3">mp1</span>
    <span class="st st4">Français (France)</span>
    <span class="st st5"><svg width="14" height="14" viewBox="0 0 14 14"><path d="M2 1h4M2 13h4M4 1v12M8 12h4" stroke="#999" fill="none"/></svg></span>
    <span class="st st6"><svg width="12" height="12" viewBox="0 0 12 12"><rect width="12" height="12" fill="#ddd"/><path d="M4 2h4v4h2l-4 4-4-4h2z" fill="#444"/></svg></span>
    <span class="st st7">Moyenne: ; Somme: 0</span>
    <div class="st zoom">
        <span class="zoom-minus"></span>
        <div class="slider"><span class="slider-knob"></span></div>
        <span class="zoom-plus"></span>
    </div>
    <span class="st8">100 %</span>
</footer>
</body>
</html>
```
FILE: styles.css
```css
html, body {
    margin: 0;
    padding: 0;
}
body {
    width: 1682px;
    height: 984px;
    overflow: hidden;
    display: flex;
    flex-direction: column;
    background-color: #3c3c3c;
    color: #eee;
    font-family: "Noto Sans", sans-serif;
    font-size: 13px;
}

/* title bar */
.title {
    height: 36px;
    border-top: 2px solid #454545;
    background-color: #2c2c2c;
    display: flex;
    align-items: center;
    justify-content: center;
    position: relative;
    flex: none;
}
.title-text {
    font-size: 15px;
    font-weight: 600;
    color: #f5f5f5;
}
.win-btns {
    position: absolute;
    right: 9px;
    top: 7px;
    display: flex;
    align-items: center;
    height: 20px;
}
.win-min {
    width: 8px;
    height: 2px;
    background: #eee;
    margin: 4px 25px 0 0;
}
.win-max {
    width: 6px;
    height: 6px;
    border: 1px solid #eee;
    margin-right: 22px;
    position: relative;
}
.win-max::after {
    content: "";
    position: absolute;
    right: -3px;
    top: -3px;
    width: 4px;
    height: 4px;
    border-top: 1px solid #bbb;
    border-right: 1px solid #bbb;
}
.win-close {
    width: 19px;
    height: 19px;
    border-radius: 50%;
    background: #e2491b;
    display: flex;
    align-items: center;
    justify-content: center;
}

/* menu */
.menu {
    height: 24px;
    flex: none;
    display: flex;
    align-items: center;
    padding-left: 1px;
    background: #3c3c3c;
    border-bottom: 1px solid #4a4a4a;
    font-size: 14.45px;
    position: relative;
    color: #f0f0f0;
}
.menu > span {
    padding: 0 8px;
}
.menu-close {
    position: absolute;
    right: 14px;
    top: 7px;
}

/* toolbars */
.toolbar {
    flex: none;
    display: flex;
    align-items: center;
    background: #3c3c3c;
    box-sizing: border-box;
}
.tb1 {
    height: 40px;
    padding-bottom: 2px;
}
.tb2 {
    height: 38px;
    align-items: flex-start;
    padding-top: 1px;
}
.tb2 .tb, .tb2 .dd, .tb2 .sep {
    margin-top: 6px;
}
.grip {
    width: 12px;
    height: 24px;
    flex: none;
    background: repeating-linear-gradient(#777 0 2px, transparent 2px 4px) 5px 0 / 3px 100% no-repeat;
}
.tb2 .grip {
    width: 13px;
    margin-top: 6px;
    background-position: 4px 0;
}
.tb {
    width: 33px;
    height: 24px;
    flex: none;
    display: flex;
    align-items: center;
    justify-content: center;
}
.tb svg {
    width: 24px;
    height: 24px;
    overflow: visible;
}
.w30 { width: 30px; }
.w31 { width: 31px; }
.w32 { width: 32px; }
.w34 { width: 34px; }
.w35 { width: 35px; }
.dd {
    width: 12px;
    height: 24px;
    flex: none;
    display: flex;
    align-items: center;
    justify-content: center;
}
.dd::after {
    content: "";
    border-left: 4px solid transparent;
    border-right: 4px solid transparent;
    border-top: 5px solid #0c0c0c;
}
.dd.off::after {
    border-top-color: #666;
}
.dd.w13 { width: 13px; }
.dd.w14 { width: 14px; }
.sep {
    width: 8px;
    height: 30px;
    flex: none;
    display: flex;
    justify-content: center;
}
.sep::after {
    content: "";
    width: 1px;
    background: #4b4b4b;
}
.sep.w6 { width: 6px; }
.sep.w10 { width: 10px; }
.tb2 .sep {
    margin-top: 3px;
}
.ico-t {
    font-family: "Liberation Sans", sans-serif;
}
.lines path {
    stroke: #8a8a8a;
    stroke-width: 1.5;
    fill: none;
}
.gl {
    font-family: "Liberation Sans", sans-serif;
    color: #555;
    font-size: 23px;
    line-height: 24px;
}
.gl.bold { font-weight: bold; }
.gl.ital { font-style: italic; }
.gl.pct { font-size: 21px; }
.gl.num { font-size: 17px; font-weight: bold; letter-spacing: -1px; }

/* combos */
.combo {
    display: flex;
    height: 33px;
    flex: none;
    box-sizing: border-box;
    background: #303030;
    border: 1px solid #222;
    border-radius: 4px;
    overflow: hidden;
}
.font-box {
    width: 143px;
}
.size-box {
    width: 84px;
    margin-left: 9px;
}
.combo-text {
    flex: 1;
    line-height: 31px;
    padding-left: 10px;
    font-size: 14.5px;
}
.combo-text.ital {
    font-style: italic;
    padding-left: 10px;
    font-size: 15px;
}
.combo-btn {
    width: 33px;
    background: #454545;
    border-left: 1px solid #252525;
    display: flex;
    align-items: center;
    justify-content: center;
    flex: none;
}
.combo-btn::after {
    content: "";
    border-left: 6px solid transparent;
    border-right: 6px solid transparent;
    border-top: 6px solid #f2f2f2;
}

/* main area */
.main {
    flex: 1;
    display: flex;
    min-height: 0;
}
.work {
    width: 1673px;
    flex: none;
    display: flex;
    flex-direction: column;
}
.sidebar {
    flex: 1;
    border-left: 2px solid #777;
    border-top: 2px solid #777;
    position: relative;
}
.side-handle {
    position: absolute;
    left: 0;
    top: 372px;
    width: 7px;
    height: 73px;
    background: #999;
}
.side-handle::after {
    content: "";
    position: absolute;
    left: 0;
    top: 31px;
    border-top: 5px solid transparent;
    border-bottom: 5px solid transparent;
    border-right: 6px solid #444;
}

/* formula bar */
.formula {
    height: 35px;
    flex: none;
    display: flex;
    align-items: center;
    position: relative;
}
.name-box {
    width: 156px;
    margin-left: 1px;
    height: 33px;
    background: #303030;
}
.fx-ico {
    font-family: "Liberation Serif", serif;
    color: #5a5a5a;
    font-size: 20px;
    flex: none;
}
.fx {
    width: 18px;
    margin-left: 14px;
    font-weight: bold;
    line-height: 20px;
}
.fx sub {
    font-size: 14px;
    vertical-align: -3px;
    line-height: 0;
}
.sum {
    margin-left: 8px;
    width: 12px;
}
.dd.small {
    width: 12px;
    margin-left: 6px;
}
.eq {
    margin-left: 7px;
    width: 11px;
    font-family: "Liberation Sans", sans-serif;
    font-weight: bold;
}
.fx-sep {
    width: 5px;
    margin-left: 8px;
}
.fx-input {
    width: 1386px;
    height: 22px;
    margin-left: 1px;
    flex: none;
    background: #333;
    border: 1px solid #888;
}
.fx-down {
    margin-left: 3px;
    border-left: 6px solid transparent;
    border-right: 6px solid transparent;
    border-top: 6px solid #f2f2f2;
}

/* sheet */
.sheet-wrap {
    height: 749px;
    flex: none;
    display: flex;
}
.sheet {
    width: 1661px;
    height: 749px;
    overflow: hidden;
    background: #eee;
    flex: none;
    position: relative;
}
.vscroll {
    width: 12px;
    flex: none;
    background: #3a3a3a;
    position: relative;
}
.split-h {
    position: absolute;
    left: 0;
    top: 0;
    width: 11px;
    height: 5px;
    background: #555;
}
.split-h::after {
    content: "";
    position: absolute;
    left: 2px;
    top: 2px;
    width: 6px;
    height: 1px;
    background: #111;
}
.vthumb {
    position: absolute;
    left: 3px;
    top: 78px;
    width: 6px;
    height: 122px;
    background: #a8a8a8;
}
.hscroll {
    height: 12px;
    flex: none;
    background: #383838;
    position: relative;
}
.hthumb {
    position: absolute;
    left: 4px;
    top: 3px;
    width: 783px;
    height: 6px;
    border-radius: 2px;
    background: #a8a8a8;
}
.hgrip {
    position: absolute;
    left: 1655px;
    top: 3px;
    width: 2px;
    height: 8px;
    background: #111;
}

.grid {
    table-layout: fixed;
    width: 1661px;
    border-collapse: separate;
    border-spacing: 0;
    font-family: "Liberation Serif", serif;
    font-size: 15.6px;
    color: #111;
}
.c14 { width: 14px; }
.c30 { width: 30px; }
.c38 { width: 38px; }
.c42 { width: 42px; }
.c45 { width: 45px; }
.c49 { width: 49px; }
.c57 { width: 57px; }
.c66 { width: 66px; }
.c68 { width: 68px; }
.c75 { width: 75px; }
.c78 { width: 78px; }
.c97 { width: 97px; }

.grid tr {
    height: 18px;
}
/* rules are drawn as shadows so they don't take space in the cell,
   a left rule sits on the last pixel of the previous column */
.grid td {
    padding: 0;
    height: 18px;
    box-sizing: border-box;
    line-height: 16px;
    white-space: nowrap;
    overflow: hidden;
    box-shadow: var(--l, 0 0 #0000), var(--t, 0 0 #0000), var(--r, 0 0 #0000), var(--b, 0 0 #0000);
}
.grid .report td {
    padding-top: 2px;
}
.grid th {
    padding: 0;
    background: #3c3c3c;
    color: #eee;
    font-family: "Noto Sans", sans-serif;
    font-weight: normal;
    font-size: 13.5px;
    box-sizing: border-box;
    line-height: 16px;
    border-bottom: 1px solid #a3a3a3;
    overflow: hidden;
}
.grid thead tr {
    height: 20px;
}
.grid thead th {
    height: 20px;
    padding-left: 2px;
    border-top: 1px solid #8c8c8c;
    border-bottom: 1px solid #999;
    border-right: 1px solid #8c8c8c;
}
.grid th.sel {
    background: #e2491b;
    color: #fff;
    font-weight: bold;
}
.bl { --l: -1px 0 #000; }
.br { --r: inset -1px 0 #000; }
.bb { --b: inset 0 -1px #000; }
.right { text-align: right; }
.ctr { text-align: center; }
.grid .small-i {
    font-style: italic;
    font-size: 11.6px;
    padding-top: 2px;
}
.s12 { font-size: 12px; }
.grid .i13 {
    font-style: italic;
    font-size: 13.3px;
    padding-top: 2px;
}
.gain {
    padding-right: 2px !important;
}
.total-lab {
    padding-right: 10px !important;
}
.box29 {
    --l: -1px 0 #000;
    --r: inset -1px 0 #000;
    --b: inset 0 -1px #000;
    text-align: center;
    font-family: "Liberation Sans", sans-serif;
    font-weight: bold;
    font-size: 15px;
}
.star-row {
    height: 20px !important;
}
.star-row.tall {
    height: 21px !important;
}
.star-row td {
    height: auto;
}
.stars {
    background: #e6e6ff;
    color: #ff00ff;
    font-weight: bold;
    font-size: 16px;
    padding: 1px 0 0 6px !important;
}
.sec {
    background: #bfbfbf;
    font-weight: bold;
    font-size: 13.1px;
    text-align: center;
}
.sec-a {
    padding-right: 4px !important;
}
.sec-b {
    padding-right: 2px !important;
}
.grid .sub {
    color: #2222ff;
    font-style: italic;
    font-size: 13.5px;
    padding: 2px 0 0 7px;
}
.lab {
    padding-left: 1px !important;
}
.dots {
    font-size: 12px;
    padding-left: 5px !important;
}
.dots2 {
    font-size: 15px;
    padding-left: 2px !important;
}
.typo {
    text-decoration: underline wavy #e00000 1.2px;
}
.op {
    font-family: "Liberation Sans", sans-serif;
    font-size: 14.7px;
}
.grid .cb {
    padding-top: 2px;
}
.op-n {
    font-family: "Liberation Sans", sans-serif;
    font-size: 13px;
}
.sum-box {
    --l: -1px 0 #000;
    --t: inset 0 1px #000;
    --r: inset -1px 0 #000;
    --b: inset 0 -1px #000;
    text-align: center;
    font-weight: bold;
}
.grid .cursor {
    overflow: visible;
    position: relative;
    box-shadow: 0 0 0 1px #000, inset 0 0 0 1px #000;
}
.handle {
    position: absolute;
    right: -3px;
    bottom: -3px;
    width: 5px;
    height: 5px;
    background: #000;
}

/* annual report */
.nums td {
    font-size: 8px;
    text-align: center;
    vertical-align: bottom;
    line-height: 8px;
}
.plus {
    color: #a020a0;
    font-style: italic;
    font-size: 13px;
    text-align: center;
}
.fixes {
    color: #2222ff;
    font-style: italic;
    font-size: 13.5px;
    text-align: center;
}
.hm, .hl, .ht {
    --l: -1px 0 #000;
    --t: inset 0 1px #000;
    text-align: center;
    font-size: 12px;
}
.hm {
    background: #dcdcdc;
    font-weight: bold;
}
.ht {
    font-weight: bold;
    font-size: 13.3px;
}
/* two lines of 18px fill the merged rows exactly, no room for padding */
.grid .report .two {
    padding-top: 0;
    line-height: 18px;
    font-size: 12.5px;
}
.side {
    --l: -1px 0 #000;
    background: #eee;
    font-size: 12px;
    padding-left: 10px !important;
    font-weight: bold;
}
.gr { background: #c6e0b4; }
.bu { background: #bdd7ee; }
.pk { background: #c27ba0; }
.top td:not(.a) {
    --t: inset 0 1px #000;
}
.cat {
    --l: -1px 0 #000;
    text-align: center;
    font-style: italic;
    font-size: 11px;
}
.mb, .m {
    --l: -1px 0 #000;
    text-align: center;
    font-size: 12px;
}
.mb {
    font-weight: bold;
}
.w {
    background: #fff;
}
.pi, .pu {
    text-align: center;
    font-size: 12px;
    color: #a32ea3;
}
.pi {
    font-style: italic;
}
.tot {
    --l: -1px 0 #000;
    text-align: center;
    font-size: 12px;
}
.thick {
    --l: -2px 0 #000;
}

/* sheet tabs */
.tabs {
    height: 25px;
    flex: none;
    display: flex;
}
.tab-nav {
    width: 144px;
    flex: none;
    display: flex;
    align-items: center;
    padding-left: 15px;
    box-sizing: border-box;
    gap: 12px;
}
.tab-add {
    margin-left: 5px;
}
.tab {
    padding: 0 13px;
    line-height: 23px;
    font-size: 12px;
    white-space: nowrap;
    color: #e8e8e8;
    box-sizing: border-box;
    height: 25px;
}
.tab-long {
    letter-spacing: -.2px;
}
.tab.active {
    background: #2f2f2f;
    border-bottom: 3px solid #999;
}

/* status bar */
.status {
    height: 22px;
    flex: none;
    display: flex;
    align-items: center;
    border-top: 1px solid #777;
    box-sizing: border-box;
    background: #3c3c3c;
    font-size: 12px;
    position: relative;
}
.st {
    height: 100%;
    box-sizing: border-box;
    border-right: 1px solid #4a4a4a;
    display: flex;
    align-items: center;
    flex: none;
    white-space: nowrap;
}
.st1 { width: 243px; padding-left: 11px; }
.st2 { width: 343px; }
.st3 { width: 189px; padding-left: 10px; }
.st4 { width: 255px; padding-left: 83px; }
.st5 { width: 100px; padding-left: 71px; }
.st6 { width: 53px; padding-left: 6px; }
.st7 { width: 302px; padding-left: 95px; }
.zoom {
    width: 141px;
    padding-left: 9px;
    gap: 7px;
}
.zoom-minus, .zoom-plus {
    width: 8px;
    height: 1px;
    background: #888;
    position: relative;
    flex: none;
}
.zoom-plus::after {
    content: "";
    position: absolute;
    left: 3px;
    top: -4px;
    width: 1px;
    height: 9px;
    background: #888;
}
.slider {
    width: 95px;
    height: 2px;
    background: #bbb;
    position: relative;
    flex: none;
}
.slider-knob {
    position: absolute;
    left: 45px;
    top: -4px;
    width: 10px;
    height: 10px;
    border-radius: 50%;
    background: #eee;
}
.st8 {
    padding-left: 9px;
    white-space: nowrap;
}
```
